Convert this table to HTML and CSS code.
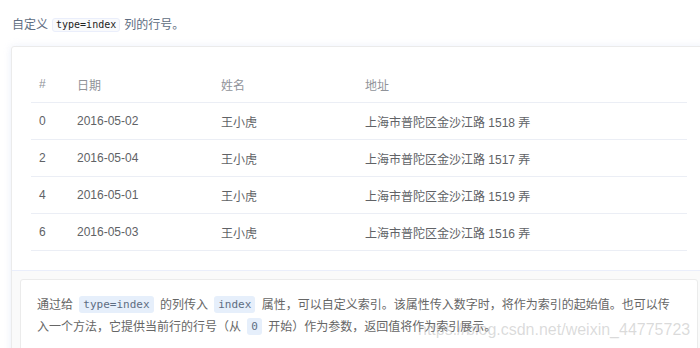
FILE: index.html
```html
<!DOCTYPE html>
<html lang="zh">
<head>
<meta charset="utf-8">
<title>自定义索引</title>
<link rel="stylesheet" href="styles.css">
</head>
<body>
<p class="intro">自定义<code class="tag">type=index</code>列的行号。</p>
<div class="demo">
  <div class="source">
    <table class="grid">
      <colgroup>
        <col class="c-idx"><col class="c-date"><col class="c-name"><col>
      </colgroup>
      <thead>
        <tr><th>#</th><th>日期</th><th>姓名</th><th>地址</th></tr>
      </thead>
      <tbody>
        <tr><td>0</td><td>2016-05-02</td><td>王小虎</td><td>上海市普陀区金沙江路 1518 弄</td></tr>
        <tr><td>2</td><td>2016-05-04</td><td>王小虎</td><td>上海市普陀区金沙江路 1517 弄</td></tr>
        <tr><td>4</td><td>2016-05-01</td><td>王小虎</td><td>上海市普陀区金沙江路 1519 弄</td></tr>
        <tr><td>6</td><td>2016-05-03</td><td>王小虎</td><td>上海市普陀区金沙江路 1516 弄</td></tr>
      </tbody>
    </table>
  </div>
  <div class="meta">
    <div class="description">通过给 <code>type=index</code> 的列传入 <code>index</code> 属性，可以自定义索引。该属性传入数字时，将作为索引的起始值。也可以传<br>入一个方法，它提供当前行的行号（从 <code>0</code> 开始）作为参数，返回值将作为索引展示。</div>
  </div>
</div>
<div class="watermark">https://blog.csdn.net/weixin_44775723</div>
</body>
</html>
```
FILE: styles.css
```css
html, body {
  margin: 0;
  padding: 0;
  overflow: hidden;
  background: #fff;
}
body {
  width: 700px;
  height: 348px;
  position: relative;
  font-family: "Liberation Sans", "Noto Sans CJK SC", sans-serif;
  font-size: 12px;
  color: #5e6d82;
}
.intro {
  margin: 0 0 11px 12px;
  padding-top: 15px;
  line-height: 20px;
  color: #5e6d82;
}
.tag {
  display: inline-block;
  font-family: "DejaVu Sans Mono", monospace;
  font-size: 10px;
  line-height: 12px;
  padding: 0 3px;
  margin: 0 4px 0 4px;
  border: 1px solid #eaeefb;
  border-radius: 3px;
  background: #f9fafc;
  color: #222;
  vertical-align: 1px;
}
.demo {
  margin-left: 11px;
  width: 696px;
  box-sizing: border-box;
  border: 1px solid #ebebeb;
  border-radius: 3px;
  box-shadow: 0 0 8px 0 rgba(232, 237, 250, .6), 0 2px 4px 0 rgba(232, 237, 250, .5);
}
.source {
  padding: 19px;
}
.grid {
  width: 100%;
  table-layout: fixed;
  border-collapse: collapse;
}
.c-idx { width: 38px; }
.c-date { width: 144px; }
.c-name { width: 144px; }
.grid th, .grid td {
  height: 36px;
  padding: 0 8px;
  text-align: left;
  border-bottom: 1px solid #ebeef5;
  font-size: 12px;
  white-space: nowrap;
}
.grid th {
  font-weight: normal;
  color: #909399;
}
.grid td {
  color: #606266;
}
.meta {
  border-top: 1px solid #eaeefb;
  background: #fafafa;
  padding: 8px;
  height: 90px;
}
.description {
  box-sizing: border-box;
  border: 1px solid #ebebeb;
  border-radius: 3px;
  background: #fff;
  padding: 14px 16px;
  font-size: 12px;
  line-height: 22px;
  color: #666;
  height: 100px;
}
.description code {
  font-family: "DejaVu Sans Mono", monospace;
  font-size: 11px;
  line-height: 17px;
  display: inline-block;
  padding: 0 4px;
  margin: 0 3px;
  border-radius: 3px;
  background: #e6effb;
  color: #5e6d82;
  vertical-align: 1px;
}
.watermark {
  position: absolute;
  left: 418px;
  top: 321px;
  font-size: 16px;
  line-height: 18px;
  color: rgba(150, 150, 150, .35);
  white-space: nowrap;
}
```
